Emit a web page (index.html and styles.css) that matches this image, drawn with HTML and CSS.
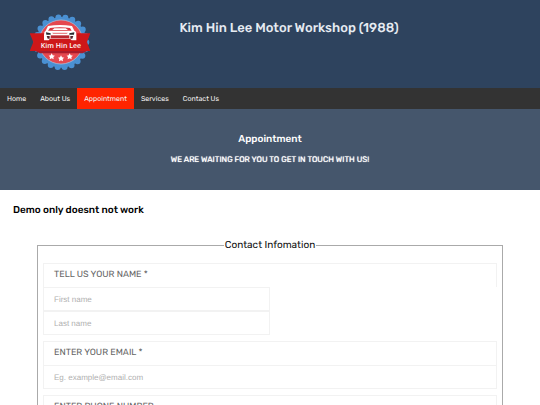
FILE: index.html
```html
<!DOCTYPE html>
<html lang="en">
<head>
<meta charset="utf-8">
<meta name="viewport" content="width=device-width, initial-scale=1">
<title>Kim Hin Lee Motor Workshop</title>
<link rel="stylesheet" href="styles.css">
</head>
<body>
<header class="site-header">
  <svg class="logo" viewBox="0 0 240 225" role="img" aria-label="Kim Hin Lee logo">
    <circle cx="124" cy="112" r="76" fill="#4a90d2"/>
    <circle cx="124" cy="112" r="75" fill="none" stroke="#4a90d2" stroke-width="18" stroke-linecap="round" pathLength="22" stroke-dasharray="0 1"/>
    <circle cx="123" cy="111" r="66" fill="#e5484f" stroke="#b8c4d8" stroke-width="2"/>
    <path d="M29 85H211L201 111L211 138H29L40 111Z" fill="#ce1719"/>
    <path d="M46 138H202L188 145H60Z" fill="#a91c2b"/>
    <path d="M84 63Q120 57 156 63L163 77Q170 79 169 90V106H155L150 101H90L86 106H72V89Q72 79 77 77Z" fill="#fff"/>
    <path d="M90 69Q120 64 150 69L155 77H84Z" fill="#d8343d"/>
    <path d="M97 75L103 70H137L144 75Z" fill="#fff"/>
    <path d="M78 82L92 85V89H79ZM163 82L148 85V89H162Z" fill="#26282d"/>
    <path d="M96 83H144L140 87H100Z" fill="#e8868a"/>
    <rect x="92" y="91" width="56" height="9" fill="#b92830"/>
    <path d="M80 93H89V101H83ZM160 93H151V101H157Z" fill="#54272d"/>
    <text class="logo-text" x="123" y="129" text-anchor="middle">Kim Hin Lee</text>
    <g fill="#fff">
      <path id="star" d="M95 145L98 151L105 152L100 156L101 163L95 160L89 163L90 156L86 152L92 151Z"/>
      <use href="#star" x="28" y="6"/>
      <use href="#star" x="54"/>
    </g>
  </svg>
  <h1>Kim Hin Lee Motor Workshop (1988)</h1>
</header>
<nav class="menu">
  <a href="#home">Home</a>
  <a href="#about">About Us</a>
  <a class="active" href="#appointment" aria-current="page">Appointment</a>
  <a href="#services">Services</a>
  <a href="#contact">Contact Us</a>
</nav>
<section class="banner" id="appointment">
  <h2>Appointment</h2>
  <p>WE ARE WAITING FOR YOU TO GET IN TOUCH WITH US!</p>
</section>
<main>
  <h2 class="notice">Demo only doesnt not work</h2>
  <form>
    <fieldset>
      <legend>Contact Infomation</legend>
      <div class="group names">
        <label for="first">TELL US YOUR NAME *</label>
        <input id="first" type="text" placeholder="First name">
        <input type="text" placeholder="Last name" aria-label="Last name">
      </div>
      <div class="group">
        <label for="email">ENTER YOUR EMAIL *</label>
        <input id="email" type="email" placeholder="Eg. example@email.com">
      </div>
      <div class="group">
        <label for="phone">ENTER PHONE NUMBER</label>
        <input id="phone" type="tel">
      </div>
    </fieldset>
  </form>
</main>
</body>
</html>
```
FILE: styles.css
```css
* { box-sizing: border-box; }

body {
  margin: 0;
  background: #fff;
  color: #111;
  font-family: Rubik, Roboto, sans-serif;
  text-rendering: geometricPrecision;
}

h1, h2, p { margin: 0; }

.site-header {
  display: flex;
  align-items: flex-start;
  padding: 5px 62px 8px 20px;
  background: #2e435e;
}

.logo {
  width: 80px;
  height: 75px;
  flex: none;
}

.logo-text {
  fill: #fff;
  font: 600 21px "Open Sans", sans-serif;
}

h1 {
  flex: 1;
  padding-top: 16px;
  color: #e6ebf2;
  font-size: 13px;
  font-weight: 500;
  line-height: 16px;
  text-align: center;
}

.menu {
  display: flex;
  background: #333;
}

.menu a {
  padding: 0 7px;
  color: #f2f2f2;
  font-size: 7px;
  line-height: 21px;
  text-decoration: none;
}

.menu .active { background: #ff2400; }

.banner {
  padding: 23px 14px;
  background: #45566c;
  color: #fff;
  text-align: center;
}

.banner h2 {
  font-size: 10px;
  font-weight: 500;
  line-height: 15px;
}

.banner p {
  padding-top: 6px;
  font-size: 8px;
  line-height: 14px;
  text-shadow: 0 0 1px #fff;
}

main { padding: 12px 37px; }

.notice {
  margin-left: -24px;
  color: #000;
  font-size: 10px;
  font-weight: 500;
  line-height: 16px;
}

form { padding-top: 20px; }

fieldset {
  min-width: 0;
  margin: 0;
  padding: 11px 5px;
  border: 1px solid #aaa;
}

legend {
  margin: 0 auto;
  padding: 0 1px;
  font-size: 10px;
  line-height: 14px;
}

.group {
  display: grid;
  margin-bottom: 6px;
}

label {
  padding: 0 10px;
  border: 1px solid #f2f2f2;
  border-bottom: 0;
  color: #666;
  font-size: 9px;
  line-height: 23px;
}

input {
  width: 100%;
  height: 24px;
  padding: 0 10px;
  border: 1px solid #f2f2f2;
  border-radius: 0;
  background: #fff;
  color: #555;
  font: 8px "Liberation Sans", sans-serif;
  text-rendering: inherit;
}

.names input { width: 50%; }

input::placeholder { color: #b0b0b0; }
```
